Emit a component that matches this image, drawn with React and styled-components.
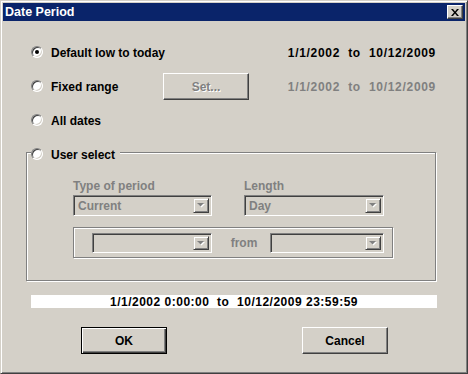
import React from 'react';
import styled, { createGlobalStyle } from 'styled-components';

const GlobalStyle = createGlobalStyle`
  html, body {
    margin: 0;
    padding: 0;
    background: #d4d0c8;
  }
  body {
    font-family: "Liberation Sans", Arial, sans-serif;
    font-size: 12px;
    font-weight: bold;
    color: #000;
  }
`;

// Window frame
const Window = styled.div`
  width: 468px;
  height: 374px;
  box-sizing: border-box;
  background: #d4d0c8;
  border: 1px solid;
  border-color: #d4d0c8 #404040 #404040 #d4d0c8;
  box-shadow: inset 1px 1px 0 #fff, inset -1px -1px 0 #808080;
  padding: 2px;
  display: flex;
  flex-direction: column;
`;

const TitleBar = styled.div`
  height: 18px;
  background: #0a246a;
  display: flex;
  align-items: center;
  justify-content: space-between;
  padding: 0 2px;
`;

const Title = styled.span`
  color: #fff;
  line-height: 18px;
  font-size: 12.5px;
`;

const CloseButton = styled.div`
  width: 16px;
  height: 14px;
  box-sizing: border-box;
  background: #d4d0c8;
  border: 1px solid;
  border-color: #fff #404040 #404040 #fff;
  box-shadow: inset -1px -1px 0 #808080;
  display: flex;
  align-items: center;
  justify-content: center;
`;

const Content = styled.div`
  flex: 1;
  display: flex;
  flex-direction: column;
  padding: 14px 29px 0 23px;
`;

const Row = styled.div`
  height: 34px;
  display: flex;
  align-items: center;
  padding-left: 5px;
`;

const Option = styled.div`
  display: flex;
  align-items: center;
  flex: none;
  width: ${p => (p.$width ? `${p.$width}px` : 'auto')};
`;

const RadioCircle = styled.span`
  width: 12px;
  height: 12px;
  box-sizing: border-box;
  border-radius: 50%;
  background: #fff;
  border: 1px solid;
  border-color: #808080 #fff #fff #808080;
  box-shadow: inset 1px 1px 0 #404040, inset -1px -1px 0 #d4d0c8;
  display: flex;
  align-items: center;
  justify-content: center;
  flex: none;

  &::after {
    content: "";
    width: 4px;
    height: 4px;
    border-radius: 50%;
    background: ${p => (p.$checked ? '#000' : 'transparent')};
  }
`;

const OptionLabel = styled.span`
  margin-left: 8px;
  line-height: 14px;
  padding-top: 2px;
`;

const DateRange = styled.span`
  margin-left: auto;
  white-space: pre;
  letter-spacing: 0.7px;
  line-height: 14px;
  padding-top: 2px;
  color: ${p => (p.$disabled ? '#808080' : '#000')};
`;

const PushButton = styled.div`
  width: 86px;
  height: 27px;
  box-sizing: border-box;
  background: #d4d0c8;
  display: flex;
  align-items: center;
  justify-content: center;
  padding-top: 1px;
  border: 1px solid;
  border-color: ${p => (p.$default ? '#000' : '#fff #404040 #404040 #fff')};
  box-shadow: ${p =>
    p.$default
      ? 'inset 1px 1px 0 #fff, inset -1px -1px 0 #404040, inset -2px -2px 0 #808080'
      : 'inset -1px -1px 0 #808080'};
  color: ${p => (p.$disabled ? '#808080' : '#000')};
  text-shadow: ${p => (p.$disabled ? '1px 1px 0 #fff' : 'none')};
`;

// Group box
const Group = styled.div`
  margin-top: 15px;
  height: 129px;
  box-sizing: border-box;
  border: 1px solid #808080;
  box-shadow: 1px 1px 0 #fff, inset 1px 1px 0 #fff;
  display: flex;
  flex-direction: column;
`;

const GroupHeader = styled.div`
  align-self: flex-start;
  margin: -6px 0 0 4px;
  padding-right: 5px;
  height: 14px;
  display: flex;
  align-items: center;
  background: #d4d0c8;
`;

const Fields = styled.div`
  padding-left: 46px;
  margin-top: 18px;
  display: flex;
  flex-direction: column;
`;

const FieldColumns = styled.div`
  display: flex;
  gap: 32px;
`;

const Field = styled.div`
  display: flex;
  flex-direction: column;
`;

const Caption = styled.span`
  color: #808080;
  line-height: 14px;
  margin-bottom: 2px;
`;

const Combo = styled.div`
  width: ${p => p.$w}px;
  height: ${p => p.$h}px;
  box-sizing: border-box;
  border: 1px solid;
  border-color: #808080 #fff #fff #808080;
  box-shadow: inset 1px 1px 0 #404040, inset -1px -1px 0 #d4d0c8;
  padding: 2px;
  display: flex;
  align-items: stretch;
  background: #d4d0c8;
`;

const ComboText = styled.span`
  flex: 1;
  padding-left: 2px;
  color: #808080;
  display: flex;
  align-items: center;
`;

const DropButton = styled.span`
  width: 16px;
  box-sizing: border-box;
  border: 1px solid;
  border-color: #d4d0c8 #404040 #404040 #d4d0c8;
  box-shadow: inset 1px 1px 0 #fff, inset -1px -1px 0 #808080;
  display: flex;
  align-items: center;
  justify-content: center;
`;

const SubGroup = styled.div`
  margin-top: 11px;
  width: 320px;
  height: 31px;
  box-sizing: border-box;
  border: 1px solid #808080;
  box-shadow: 1px 1px 0 #fff, inset 1px 1px 0 #fff;
  display: flex;
  align-items: center;
  padding: 1px 0 0 18px;
`;

const FromLabel = styled.span`
  width: 58px;
  padding-left: 6px;
  box-sizing: border-box;
  text-align: center;
  color: #808080;
`;

const DateBar = styled.div`
  margin: 14px -1px 0 5px;
  height: 13px;
  background: #fff;
  text-align: center;
  line-height: 14px;
  letter-spacing: 0.5px;
  white-space: pre;
`;

const ButtonRow = styled.div`
  margin-top: 19px;
  display: flex;
  gap: 135px;
  padding-left: 55px;
`;

const Arrow = () => (
  <svg width="8" height="5" viewBox="0 0 8 5">
    <polygon points="1,1 8,1 4.5,4.5" fill="#fff" />
    <polygon points="0,0 7,0 3.5,3.5" fill="#808080" />
  </svg>
);

const CloseGlyph = () => (
  <svg width="8" height="7" viewBox="0 0 8 7">
    <path d="M0 0h2l2 2.5L6 0h2L5 3.5 8 7H6L4 4.5 2 7H0l3-3.5z" fill="#000" />
  </svg>
);

const Dropdown = ({ w, h, value }) => (
  <Combo $w={w} $h={h}>
    <ComboText>{value}</ComboText>
    <DropButton>
      <Arrow />
    </DropButton>
  </Combo>
);

const Radio = ({ checked, label, width }) => (
  <Option $width={width}>
    <RadioCircle $checked={checked} />
    <OptionLabel>{label}</OptionLabel>
  </Option>
);

export default function App() {
  return (
    <>
      <GlobalStyle />
      <Window>
        <TitleBar>
          <Title>Date Period</Title>
          <CloseButton>
            <CloseGlyph />
          </CloseButton>
        </TitleBar>
        <Content>
          <Row>
            <Radio checked label="Default low to today" />
            <DateRange>{'1/1/2002  to  10/12/2009'}</DateRange>
          </Row>
          <Row>
            <Radio label="Fixed range" width={132} />
            <PushButton $disabled>Set...</PushButton>
            <DateRange $disabled>{'1/1/2002  to  10/12/2009'}</DateRange>
          </Row>
          <Row>
            <Radio label="All dates" />
          </Row>
          <Group>
            <GroupHeader>
              <Radio label="User select" />
            </GroupHeader>
            <Fields>
              <FieldColumns>
                <Field>
                  <Caption>Type of period</Caption>
                  <Dropdown w={139} h={21} value="Current" />
                </Field>
                <Field>
                  <Caption>Length</Caption>
                  <Dropdown w={140} h={21} value="Day" />
                </Field>
              </FieldColumns>
              <SubGroup>
                <Dropdown w={120} h={20} value="" />
                <FromLabel>from</FromLabel>
                <Dropdown w={114} h={20} value="" />
              </SubGroup>
            </Fields>
          </Group>
          <DateBar>{'1/1/2002 0:00:00  to  10/12/2009 23:59:59'}</DateBar>
          <ButtonRow>
            <PushButton $default>OK</PushButton>
            <PushButton>Cancel</PushButton>
          </ButtonRow>
        </Content>
      </Window>
    </>
  );
}
